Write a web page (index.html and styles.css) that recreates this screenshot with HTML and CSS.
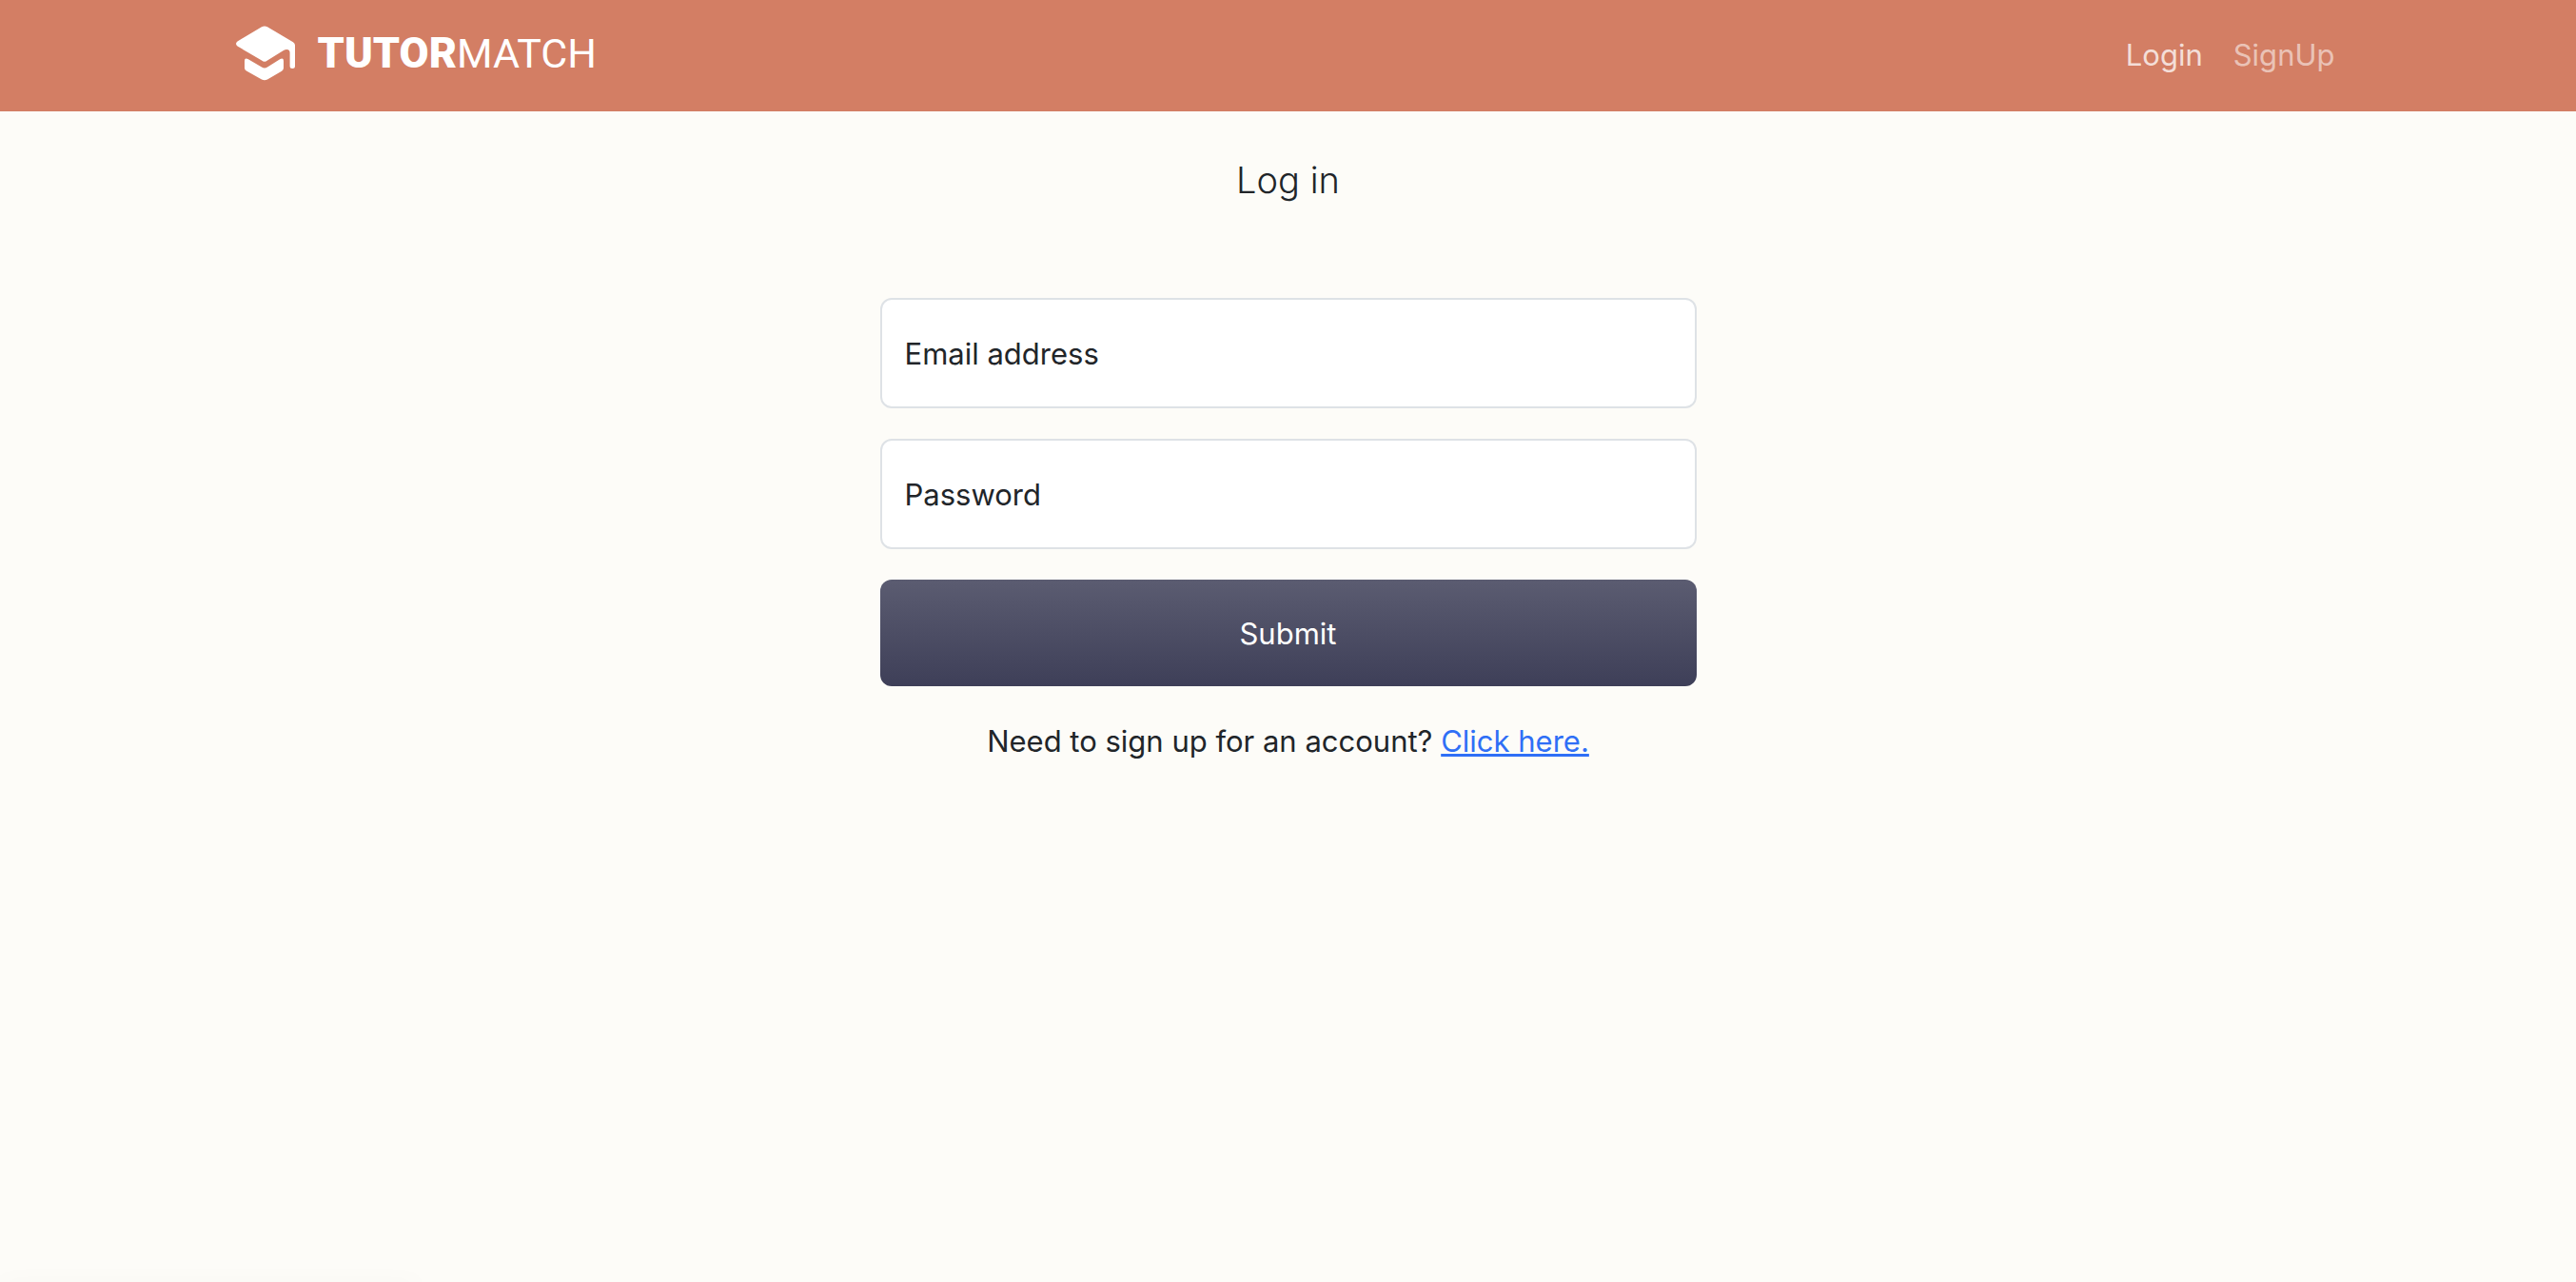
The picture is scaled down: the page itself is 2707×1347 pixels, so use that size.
FILE: index.html
```html
<!DOCTYPE html>
<html lang="en">
<head>
<meta charset="utf-8">
<meta name="viewport" content="width=device-width, initial-scale=1">
<title>TutorMatch - Log in</title>
<link rel="stylesheet" href="styles.css">
</head>
<body>
<header class="navbar">
  <div class="container navbar-inner">
    <a class="brand" href="#">
      <svg class="brand-icon" viewBox="0 0 62 58" aria-hidden="true">
        <path d="M27 1.200Q30 -0.400 33 1.200L60 17.200Q62 18.400 62 20.500V42.500Q62 45 59.300 45T56.600 42.500V28.500Q56.600 25 53.500 25Q51.500 25 49.500 26.300L33 36.500Q30 39 27 36.500L1.500 21.500Q-1.500 19 1.500 16.500Z"/>
        <path d="M9 37Q9 33.500 12.500 35L27 43.500Q30 45.500 33 43.500L46.500 35Q50 33.500 50 37V44.500Q50 46.500 48 47.800L33 56.500Q30 58 27 56.500L11 47.500Q9 46.300 9 44.500Z"/>
      </svg>
      <span class="brand-name"><strong>TUTOR</strong>MATCH</span>
    </a>
    <nav class="nav">
      <a class="nav-link active" href="#">Login</a>
      <a class="nav-link" href="#">SignUp</a>
    </nav>
  </div>
</header>
<main class="container page">
  <h1 class="title">Log in</h1>
  <form class="form">
    <div class="field">
      <input class="field-input" id="email" type="email">
      <label class="field-label" for="email">Email address</label>
    </div>
    <div class="field">
      <input class="field-input" id="password" type="password">
      <label class="field-label" for="password">Password</label>
    </div>
    <button class="submit" type="submit">Submit</button>
    <p class="hint">Need to sign up for an account? <a class="hint-link" href="#">Click here.</a></p>
  </form>
</main>
</body>
</html>
```

FILE: styles.css
```css
*, *::before, *::after {
  box-sizing: border-box;
}

body {
  margin: 0;
  min-height: 100vh;
  background: #fdfcf8;
  color: #212529;
  font-family: Inter, "Liberation Sans", sans-serif;
  font-size: 31px;
  line-height: 48px;
}

/* soft shadow rising from the lower left edge */
body::after {
  content: "";
  position: fixed;
  bottom: -8px;
  left: 0;
  width: 440px;
  height: 8px;
  box-shadow: 0 0 24px rgba(0, 0, 0, .04);
  pointer-events: none;
}

.container {
  max-width: 2280px;
  margin: 0 auto;
  padding: 0 24px;
}

.navbar {
  background: #d37e64;
  padding: 16px 0 21px;
}

.navbar-inner {
  display: flex;
  align-items: center;
  justify-content: space-between;
}

.brand {
  display: flex;
  align-items: center;
  gap: 24px;
  padding: 8px 10px;
  color: #fff;
  text-decoration: none;
}

.brand-icon {
  width: 62px;
  height: 58px;
  fill: currentColor;
}

.brand-name {
  font-family: Roboto, "Liberation Sans", sans-serif;
  font-size: 43px;
  font-weight: 400;
}

.brand-name strong {
  font-size: 45px;
  font-weight: 900;
}

.nav {
  display: flex;
}

.nav-link {
  padding: 18px 16px 14px;
  color: rgba(255, 255, 255, .55);
  text-decoration: none;
}

.nav-link.active {
  color: rgba(255, 255, 255, .75);
}

.page {
  display: flex;
  flex-direction: column;
  align-items: center;
}

.title {
  margin: 48px 0 100px;
  font-size: 38px;
  font-weight: 300;
  line-height: 48px;
}

.form {
  display: grid;
  gap: 32px;
  width: 100%;
  max-width: 858px;
}

.field {
  display: grid;
  align-items: center;
}

.field-input,
.field-label {
  grid-area: 1 / 1;
}

.field-input {
  width: 100%;
  height: 116px;
  padding: 32px 24px;
  border: 2px solid #dee2e6;
  border-radius: 12px;
  background: #fff;
  color: inherit;
  font: inherit;
}

.field-label {
  padding: 2px 26px 0;
  pointer-events: none;
}

.submit {
  padding: 33px 24px 31px;
  border: 0;
  border-radius: 12px;
  background: linear-gradient(#5b5c71, #3e3f58);
  color: #fff;
  font: inherit;
  cursor: pointer;
}

.hint {
  margin: 0;
  padding-top: 2px;
  text-align: center;
}

.hint-link {
  color: #2f6ff6;
}
```
